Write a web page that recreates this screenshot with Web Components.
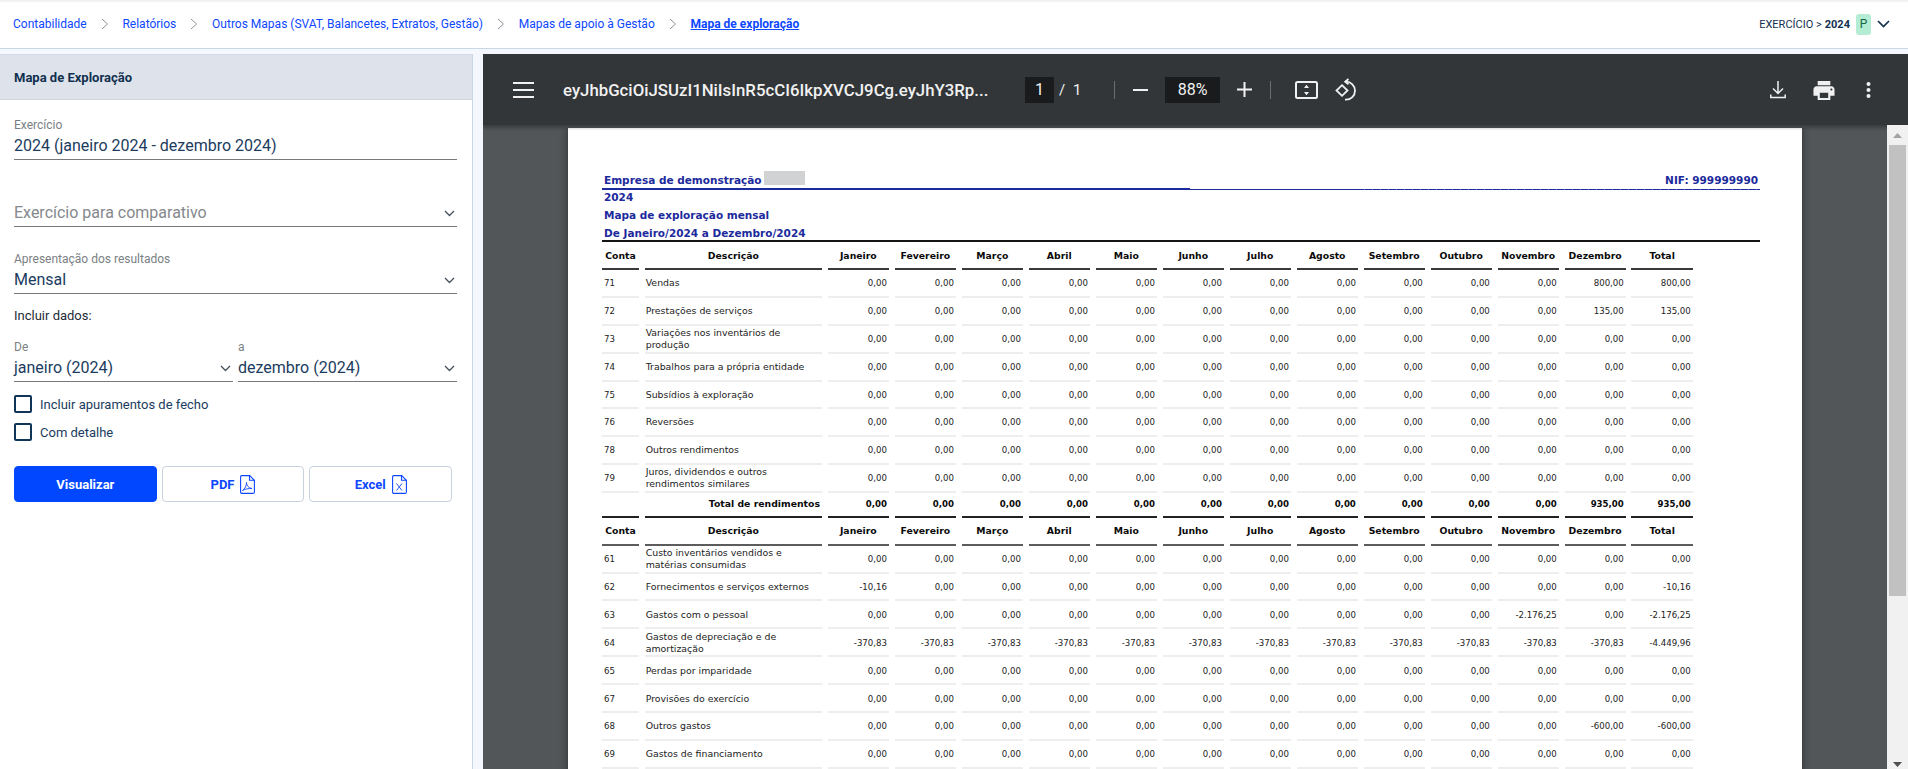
<!DOCTYPE html>
<html lang="pt">
<head>
<meta charset="utf-8">
<title>Mapa de Exploração</title>
<style>
    html, body {
        margin: 0;
        height: 100%;
        overflow: hidden;
        background: #f4f7fd;
        font-family: Roboto, sans-serif;
    }
    app-layout { height: 100%; }
</style>
</head>
<body>
<app-layout>
    <top-bar slot="top"></top-bar>
    <side-panel slot="side" heading="Mapa de Exploração"></side-panel>
    <pdf-viewer slot="main" file="eyJhbGciOiJSUzI1NiIsInR5cCI6IkpXVCJ9Cg.eyJhY3Rp..."></pdf-viewer>
</app-layout>

<script>
const CHEVRON = `<svg width="11" height="7" viewBox="0 0 11 7"><path d="M1 1l4.5 4.5L10 1" fill="none" stroke="currentColor" stroke-width="1.3"/></svg>`;

class AppLayout extends HTMLElement {
    constructor() {
        super();
        this.attachShadow({ mode: "open" }).innerHTML = `
        <style>
            :host { display: flex; flex-direction: column; height: 100%; }
            .body { flex: 1; min-height: 0; display: flex; gap: 10px; padding-top: 5px; }
        </style>
        <slot name="top"></slot>
        <div class="body"><slot name="side"></slot><slot name="main"></slot></div>`;
    }
}

class TopBar extends HTMLElement {
    constructor() {
        super();
        const crumbs = ["Contabilidade", "Relatórios", "Outros Mapas (SVAT, Balancetes, Extratos, Gestão)", "Mapas de apoio à Gestão"];
        const sep = `<svg class="sep" width="8" height="12" viewBox="0 0 8 12"><path d="M1 1l5.5 5L1 11" fill="none" stroke="#8d939b" stroke-width="1"/></svg>`;
        this.attachShadow({ mode: "open" }).innerHTML = `
        <style>
            :host {
                display: flex; align-items: center; justify-content: space-between;
                height: 48px; box-sizing: content-box; background: #fff;
                border-bottom: 1px solid #c9d6e4;
                background-image: linear-gradient(#ececec, #fff 3px);
                padding: 0 18px 0 13px;
                font: 12px Roboto, sans-serif;
            }
            nav { display: flex; align-items: center; color: #0d47ff; }
            .sep { margin: 0 13.900px; }
            b { font-weight: 700; text-decoration: underline; }
            .year { display: flex; align-items: center; color: #12304f; font-size: 11px; }
            .year b { text-decoration: none; margin-left: 3px; }
            .badge {
                width: 15px; height: 21px; margin-left: 6px; border-radius: 3px;
                background: #b5edd4; color: #14663f; font-size: 12px;
                display: flex; align-items: center; justify-content: center;
            }
            .arrow { margin-left: 6px; color: #12304f; display: flex; }
        </style>
        <nav>${crumbs.map(c => `<span>${c}</span>${sep}`).join("")}<b>Mapa de exploração</b></nav>
        <div class="year">EXERCÍCIO &gt;<b>2024</b><span class="badge">P</span>
            <span class="arrow"><svg width="13" height="8" viewBox="0 0 13 8"><path d="M1 1l5.5 5.5L12 1" fill="none" stroke="currentColor" stroke-width="1.7"/></svg></span>
        </div>`;
    }
}

class FormField extends HTMLElement {
    constructor() {
        super();
        const label = this.getAttribute("label");
        const value = this.getAttribute("value");
        const placeholder = this.getAttribute("placeholder");
        const arrow = this.hasAttribute("select") ? `<span class="arrow">${CHEVRON}</span>` : "";
        this.attachShadow({ mode: "open" }).innerHTML = `
        <style>
            :host { display: block; font-family: Roboto, sans-serif; }
            label { display: block; height: 15px; line-height: 15px; font-size: 12px; color: #7b7f84; }
            .box {
                display: flex; align-items: center; justify-content: space-between;
                height: 27px; box-sizing: border-box; border-bottom: 1px solid #76797c;
                padding: 0 2px 1px 0;
                font-size: 16px; color: #1b3c5e;
            }
            .box.empty { color: #85888c; }
            .arrow { color: #44505c; display: flex; margin-top: 2px; }
        </style>
        ${label ? `<label>${label}</label>` : ""}
        <div class="box ${value ? "" : "empty"}"><span>${value || placeholder}</span>${arrow}</div>`;
    }
}

class CheckField extends HTMLElement {
    constructor() {
        super();
        this.attachShadow({ mode: "open" }).innerHTML = `
        <style>
            :host { display: flex; align-items: center; gap: 8px; height: 18px; font-size: 13px; color: #1b3c5e; }
            i { width: 18px; height: 18px; box-sizing: border-box; border: 2px solid #0f3558; border-radius: 2px; }
        </style>
        <i></i><slot></slot>`;
    }
}

class ActionButton extends HTMLElement {
    constructor() {
        super();
        this.attachShadow({ mode: "open" }).innerHTML = `
        <style>
            :host {
                flex: 1; height: 36px; box-sizing: border-box;
                display: flex; align-items: center; justify-content: center; gap: 6px;
                border: 1px solid #c8d2de; border-radius: 4px; background: #fff;
                color: #0d47ff; font: 700 13px Roboto, sans-serif;
            }
            :host([primary]) { background: #0047ff; border-color: #0047ff; color: #fff; }
        </style>
        <slot></slot><slot name="icon"></slot>`;
    }
}

class SidePanel extends HTMLElement {
    constructor() {
        super();
        const fileIcon = inner => `<svg slot="icon" width="15" height="19" viewBox="0 0 15 19" fill="none" stroke="#0d47ff" stroke-width="1.1"><path d="M1.5.6h8.2l4.700 4.700v11.600q0 1.500-1.500 1.500H2q-1.400 0-1.400-1.500V2q0-1.400.9-1.400z"/><path d="M9.500.6v4.700h4.900"/>${inner}</svg>`;
        this.attachShadow({ mode: "open" }).innerHTML = `
        <style>
            :host {
                display: block; width: 473px; height: 100%; flex: none; box-sizing: border-box;
                background: #fff; border-right: 1px solid #c9d6e4;
                font-family: Roboto, sans-serif;
            }
            h2 {
                margin: 0; height: 46px; box-sizing: border-box; padding-left: 14px;
                background: #dee3eb; border-bottom: 1px solid #ced6e0; border-top: 1px solid #d3dae3;
                display: flex; align-items: center;
                font-size: 13px; font-weight: 700; color: #12304f;
            }
            form-field, check-field { margin-left: 14px; margin-right: 15px; }
            .first { margin-top: 18px; }
            .second { margin-top: 40px; }
            .third { margin-top: 25px; }
            .lead { margin: 14px 0 0 14px; height: 15px; line-height: 15px; font-size: 13px; color: #1e2b38; }
            .range { display: flex; gap: 5px; margin: 17px 15px 0 14px; }
            .range form-field { flex: 1; margin: 0; }
            .c1 { margin-top: 13px; }
            .c2 { margin-top: 10px; }
            .actions { display: flex; gap: 5px; margin: 25px 20px 0 14px; }
        </style>
        <h2>${this.getAttribute("heading")}</h2>
        <form-field class="first" label="Exercício" value="2024 (janeiro 2024 - dezembro 2024)"></form-field>
        <form-field class="second" select placeholder="Exercício para comparativo"></form-field>
        <form-field class="third" select label="Apresentação dos resultados" value="Mensal"></form-field>
        <div class="lead">Incluir dados:</div>
        <div class="range">
            <form-field select label="De" value="janeiro (2024)"></form-field>
            <form-field select label="a" value="dezembro (2024)"></form-field>
        </div>
        <check-field class="c1">Incluir apuramentos de fecho</check-field>
        <check-field class="c2">Com detalhe</check-field>
        <div class="actions">
            <action-button primary>Visualizar</action-button>
            <action-button>PDF${fileIcon(`<path d="M2.500 15.500c2.500-1.500 4-5 4-8 0 3 2 5.500 5.500 6-3-.2-7 .5-9.500 2z" stroke-width=".9"/>`)}</action-button>
            <action-button>Excel${fileIcon(`<path d="M4.500 8.500l5.500 7M10 8.500l-5.500 7" stroke-width=".9"/>`)}</action-button>
        </div>`;
    }
}

class PdfToolbar extends HTMLElement {
    constructor() {
        super();
        this.attachShadow({ mode: "open" }).innerHTML = `
        <style>
            :host {
                display: flex; align-items: center; height: 71px; flex: none;
                background: #323639; color: #f1f1f1; position: relative; z-index: 2;
                box-shadow: 0 3px 3px rgba(0,0,0,.28);
                font: 14px Roboto, sans-serif;
            }
            svg { display: block; flex: none; }
            .name { margin-left: 29px; width: 436px; font-size: 16.800px; font-weight: 500; white-space: nowrap; overflow: hidden; }
            .box { background: #191b1c; height: 26px; display: flex; align-items: center; justify-content: center; font-size: 16px; }
            .page { width: 29px; margin-left: 26px; }
            .of { margin-left: 5px; width: 39px; font-size: 15px; word-spacing: 4px; }
            .sep { width: 1px; height: 18px; background: #6a6e71; }
            .zoom { width: 55px; margin: 0 17px; }
            .right { margin-left: auto; display: flex; align-items: center; }
        </style>
        <svg style="margin-left:30px" width="21" height="16" viewBox="0 0 21 16" fill="#f1f1f1"><rect width="21" height="2"/><rect y="7" width="21" height="2"/><rect y="14" width="21" height="2"/></svg>
        <div class="name">${this.getAttribute("file")}</div>
        <div class="box page">1</div>
        <div class="of">/ 1</div>
        <div class="sep" style="margin-left:16px"></div>
        <svg style="margin-left:18px" width="15" height="2" fill="#f1f1f1"><rect width="15" height="2"/></svg>
        <div class="box zoom">88%</div>
        <svg width="15" height="15" fill="#f1f1f1"><rect y="6.500" width="15" height="2"/><rect x="6.500" width="2" height="15"/></svg>
        <div class="sep" style="margin-left:18px"></div>
        <svg style="margin-left:24px" width="23" height="18" viewBox="0 0 23 18"><rect x="1" y="1" width="21" height="16" rx="1.500" fill="none" stroke="#f1f1f1" stroke-width="2"/><path d="M11.500 3.800l2.500 3.200H9zM11.500 14.200L9 11h5z" fill="#f1f1f1"/></svg>
        <svg style="margin-left:17px" width="23" height="24" viewBox="0 0 23 24" fill="none" stroke="#f1f1f1" stroke-width="1.800"><path d="M7 7.200l5.500 5.300L7 17.800 1.500 12.500z"/><path d="M10.500 3.700h.5a9 9 0 0 1 0 18h-1"/><path d="M13.500 1l-3.300 2.700 3.300 2.700"/></svg>
        <div class="right">
            <svg width="16" height="18" viewBox="0 0 16 18" fill="none" stroke="#f1f1f1" stroke-width="1.500"><path d="M8 0v12M3 7.500l5 5 5-5M.8 13.500v3h14.400v-3"/></svg>
            <svg style="margin-left:27px" width="22" height="20" viewBox="2 2 20 19" fill="#f1f1f1"><path d="M19 8H5c-1.660 0-3 1.340-3 3v6h4v4h12v-4h4v-6c0-1.660-1.340-3-3-3zm-3 11H8v-5h8v5zm3-7c-.55 0-1-.45-1-1s.45-1 1-1 1 .45 1 1-.45 1-1 1zm-1-9H6v4h12V3z"/></svg>
            <svg style="margin:0 37px 0 31px" width="5" height="16" viewBox="0 0 5 16" fill="#f1f1f1"><circle cx="2.500" cy="2" r="2"/><circle cx="2.500" cy="8" r="2"/><circle cx="2.500" cy="14" r="2"/></svg>
        </div>`;
    }
}

const MONTHS = ["Janeiro", "Fevereiro", "Março", "Abril", "Maio", "Junho", "Julho", "Agosto", "Setembro", "Outubro", "Novembro", "Dezembro", "Total"];

// one row = conta, descricao, valores fora de zero (indice da coluna -> texto)
const RENDIMENTOS = [
    ["71", "Vendas", { 11: "800,00", 12: "800,00" }],
    ["72", "Prestações de serviços", { 11: "135,00", 12: "135,00" }],
    ["73", "Variações nos inventários de produção"],
    ["74", "Trabalhos para a própria entidade"],
    ["75", "Subsídios à exploração"],
    ["76", "Reversões"],
    ["78", "Outros rendimentos"],
    ["79", "Juros, dividendos e outros rendimentos similares"],
];
const GASTOS = [
    ["61", "Custo inventários vendidos e matérias consumidas"],
    ["62", "Fornecimentos e serviços externos", { 0: "-10,16", 12: "-10,16" }],
    ["63", "Gastos com o pessoal", { 10: "-2.176,25", 12: "-2.176,25" }],
    ["64", "Gastos de depreciação e de amortização", Object.assign(Object.fromEntries(MONTHS.map((m, i) => [i, "-370,83"])), { 12: "-4.449,96" })],
    ["65", "Perdas por imparidade"],
    ["67", "Provisões do exercício"],
    ["68", "Outros gastos", { 11: "-600,00", 12: "-600,00" }],
    ["69", "Gastos de financiamento"],
];

class ReportTable extends HTMLElement {
    constructor() {
        super();
        const head = cls => ["Conta", "Descrição", ...MONTHS].map(t => `<div class="th ${cls}">${t}</div>`).join("");
        const rows = (list, cls = "") => list.map(([code, desc, vals = {}]) =>
            `<div class="td code ${cls}">${code}</div><div class="td desc ${cls}">${desc}</div>` +
            MONTHS.map((m, i) => `<div class="td num ${cls}">${vals[i] || "0,00"}</div>`).join("")).join("");
        const total = `<div class="tt"></div><div class="tt lbl">Total de rendimentos</div>` +
            MONTHS.map((m, i) => `<div class="tt">${i > 10 ? "935,00" : "0,00"}</div>`).join("");
        this.attachShadow({ mode: "open" }).innerHTML = `
        <style>
            :host {
                display: grid;
                grid-template-columns: 37px 177.3px repeat(13, 61.3px);
                column-gap: 5.7px;
                font: 8.6px/12px "DejaVu Sans", sans-serif;
                color: #222;
            }
            .th {
                height: 30px; box-sizing: border-box; padding-top: 1px;
                border-top: 2px solid #222; border-bottom: 2px solid #3a3a3a;
                display: flex; align-items: center; justify-content: center;
                font-weight: 700; font-size: 9.3px; color: #0a0a0a;
            }
            .th.low { border-bottom-color: #5c5c5c; }
            .td {
                height: 27.9px; box-sizing: border-box; border-bottom: 2px solid #eeeeee;
                display: flex; align-items: center;
            }
            .code { padding-left: 2px; }
            .desc { padding-left: 1px; padding-right: 10px; font-size: 9.4px; }
            .num { justify-content: flex-end; padding-right: 2px; }
            .down { padding-top: 1px; }
            .tt {
                height: 22.5px; box-sizing: border-box; padding-right: 2px;
                display: flex; align-items: center; justify-content: flex-end;
                font-weight: 700; color: #0a0a0a;
            }
            .lbl { font-size: 9.3px; }
        </style>
        ${head("")}${rows(RENDIMENTOS)}${total}${head("low")}${rows(GASTOS, "down")}`;
    }
}

class ReportPage extends HTMLElement {
    constructor() {
        super();
        this.attachShadow({ mode: "open" }).innerHTML = `
        <style>
            :host {
                display: block; width: 1234px; height: 800px; flex: none; box-sizing: border-box;
                background: #fff; padding: 43px 42px 0 34px;
                box-shadow: 0 0 8px rgba(0,0,0,.45);
            }
            .titles { font: 700 10.5px/18px "DejaVu Sans", sans-serif; color: #1c2a9c; }
            .line { padding-left: 2px; height: 18px; }
            .first { display: flex; justify-content: space-between; padding: 0 2px; height: 16.5px; }
            .mask { display: inline-block; width: 41px; height: 14px; background: #d1d2d3; margin-left: 2px; vertical-align: -1px; }
            .rule { display: flex; height: 2px; margin-bottom: -1.5px; }
            .rule i { background: #1c2a9c; }
            .rule i:nth-child(1) { width: 588px; }
            .rule i:nth-child(2) { width: 167px; height: 1px; margin-top: 1px; }
            .rule i:nth-child(3) { flex: 1; height: 1px; margin-top: 1px; background: repeating-linear-gradient(90deg, #1c2a9c 0 7px, #6a72c0 7px 8px); }
            .black { height: 2px; background: #151515; margin: -2px 0; position: relative; z-index: 1; }
        </style>
        <div class="titles">
            <div class="first"><span>Empresa de demonstração<span class="mask"></span></span><span>NIF: 999999990</span></div>
            <div class="rule"><i></i><i></i><i></i></div>
            <div class="line">2024</div>
            <div class="line">Mapa de exploração mensal</div>
            <div class="line">De Janeiro/2024 a Dezembro/2024</div>
        </div>
        <div class="black"></div>
        <report-table></report-table>`;
    }
}

class PdfScrollbar extends HTMLElement {
    constructor() {
        super();
        this.attachShadow({ mode: "open" }).innerHTML = `
        <style>
            :host {
                display: flex; flex-direction: column; align-items: center; flex: none;
                width: 21px; margin-top: -3px; background: #f1f1f1; position: relative; z-index: 3;
            }
            .up { margin-top: 8px; }
            .thumb { width: 17px; height: 451px; background: #c1c1c1; margin-top: 7px; }
            .down { margin-top: auto; margin-bottom: 2px; }
        </style>
        <svg class="up" width="9" height="5"><path d="M0 5h9L4.500 0z" fill="#a3a3a3"/></svg>
        <div class="thumb"></div>
        <svg class="down" width="9" height="5"><path d="M0 0h9L4.500 5z" fill="#505050"/></svg>`;
    }
}

class PdfViewer extends HTMLElement {
    constructor() {
        super();
        this.attachShadow({ mode: "open" }).innerHTML = `
        <style>
            :host { display: flex; flex-direction: column; flex: 1; min-width: 0; height: 100%; background: #525659; overflow: hidden; }
            .main { flex: 1; min-height: 0; display: flex; padding-top: 3px; }
            .pages { flex: 1; min-width: 0; padding-left: 85px; overflow: hidden; }
        </style>
        <pdf-toolbar file="${this.getAttribute("file")}"></pdf-toolbar>
        <div class="main">
            <div class="pages"><report-page></report-page></div>
            <pdf-scrollbar></pdf-scrollbar>
        </div>`;
    }
}

customElements.define("app-layout", AppLayout);
customElements.define("top-bar", TopBar);
customElements.define("form-field", FormField);
customElements.define("check-field", CheckField);
customElements.define("action-button", ActionButton);
customElements.define("side-panel", SidePanel);
customElements.define("pdf-toolbar", PdfToolbar);
customElements.define("report-table", ReportTable);
customElements.define("report-page", ReportPage);
customElements.define("pdf-scrollbar", PdfScrollbar);
customElements.define("pdf-viewer", PdfViewer);
</script>
</body>
</html>
